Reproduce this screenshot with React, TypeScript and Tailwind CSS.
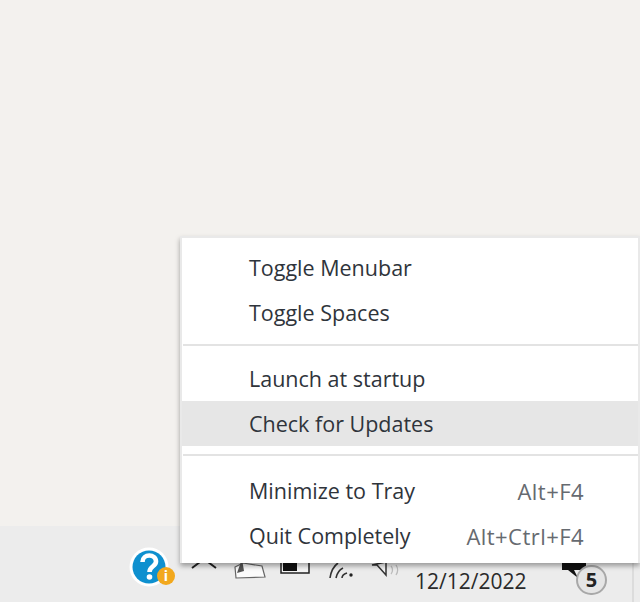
import React from "react";

const font = { fontFamily: '"Open Sans", "Noto Sans", sans-serif' };

function Item({ label, shortcut, active }: { label: string; shortcut?: string; active?: boolean }) {
  return (
    <div className={`flex items-center justify-between h-[45px] pl-[67px] pr-[54px] ${active ? "bg-[#e6e6e6]" : ""}`}>
      <span>{label}</span>
      {shortcut && <span className="text-[#666a70] text-[22px] tracking-[0.45px]">{shortcut}</span>}
    </div>
  );
}

function Sep() {
  return <div className="h-[2px] bg-[#e3e3e3] ml-[1px]" />;
}

export default function App() {
  return (
    <div className="relative w-[640px] h-[602px] overflow-hidden bg-[#f3f1ee] flex flex-col justify-end" style={font}>
      <div className="h-[76px] bg-[#ececec] flex items-start">
        <div className="w-[133px]" />
        <div className="relative w-[36px] h-[36px] mt-[22px]">
          <svg viewBox="0 0 36 36" className="w-[36px] h-[36px] overflow-visible">
            <circle cx="16" cy="19" r="19.5" fill="#ffffff" />
            <circle cx="16" cy="19" r="16.5" fill="#0e90cf" />
            <path d="M9.5 14 C9.5 5.5 23 5.5 23 13.5 C23 18.5 16.5 18 16.5 24" fill="none" stroke="#ffffff" strokeWidth="4.6" />
            <circle cx="16.5" cy="29" r="2.8" fill="#ffffff" />
          </svg>
          <div className="absolute left-[24px] top-[19px] w-[18px] h-[18px] rounded-full bg-[#f2a81d] flex items-center justify-center text-white text-[14px] font-bold leading-none">i</div>
        </div>
        <svg viewBox="0 0 240 40" className="w-[240px] h-[40px] mt-[21px] ml-[4px] shrink-0">
          <path d="M19 21 L31 12 L43 21" fill="none" stroke="#222" strokeWidth="2" />
          <path d="M62 20 L70 16 L89 19 L92 30 L63 31 Z" fill="#fbfbfb" stroke="#666" strokeWidth="1.2" />
          <path d="M64 26 L69 12 L71 24 Z" fill="#555" />
          <path d="M108 12 H136 V26 H108 Z" fill="#f5f5f5" stroke="#222" strokeWidth="1.5" />
          <rect x="110" y="14" width="14" height="10" fill="#111" />
          <path d="M157 31 C158 24 161 19 165 16 M163 31 C164 26 166 23 170 21 M169 31 C169 29 171 27 174 26" fill="none" stroke="#333" strokeWidth="1.6" />
          <circle cx="178" cy="28" r="1.7" fill="#222" />
          <path d="M199 18 H204 L213 28 V15 Z" fill="#f5f5f5" stroke="#333" strokeWidth="1.5" />
          <path d="M218 19 C220 21 220 25 218 27 M223 18 C225 21 225 25 223 28" fill="none" stroke="#bbb" strokeWidth="1.3" />
        </svg>
        <div className="ml-[2px] mt-[36px] text-[21px] leading-[38px] text-[#2a2a2a] w-[147px] shrink-0 whitespace-nowrap">12/12/2022</div>
        <div className="relative w-[50px] h-[50px] shrink-0">
          <svg viewBox="0 0 26 18" className="absolute left-0 top-[34px] w-[26px] h-[18px] overflow-visible">
            <path d="M0 0 H24 V10 H12 L16 18 L6 10 H0 Z" fill="#111" />
          </svg>
          <div className="absolute left-[14px] top-[39px] w-[31px] h-[30px] rounded-full bg-[#e5e5e5] border-2 border-[#a8a8a8] flex items-center justify-center text-[20px] font-bold text-[#222] leading-none">5</div>
        </div>
        <div className="w-[2px] h-[76px] bg-[#dcdcdc] ml-[20px]" />
      </div>
      <div className="absolute left-[180px] top-[236px] w-[460px] h-[327px] bg-white border-t-2 border-l-2 border-r-2 border-[#e9e9e9] shadow-[0_3px_5px_rgba(0,0,0,0.35)] pt-[7px] text-[21.5px] leading-none text-[#2f343b]">
        <Item label="Toggle Menubar" />
        <Item label="Toggle Spaces" />
        <div className="h-[9px]" />
        <Sep />
        <div className="h-[10px]" />
        <Item label="Launch at startup" />
        <Item label="Check for Updates" active />
        <div className="h-[8px]" />
        <Sep />
        <div className="h-[12px]" />
        <Item label="Minimize to Tray" shortcut="Alt+F4" />
        <Item label="Quit Completely" shortcut="Alt+Ctrl+F4" />
      </div>
    </div>
  );
}
